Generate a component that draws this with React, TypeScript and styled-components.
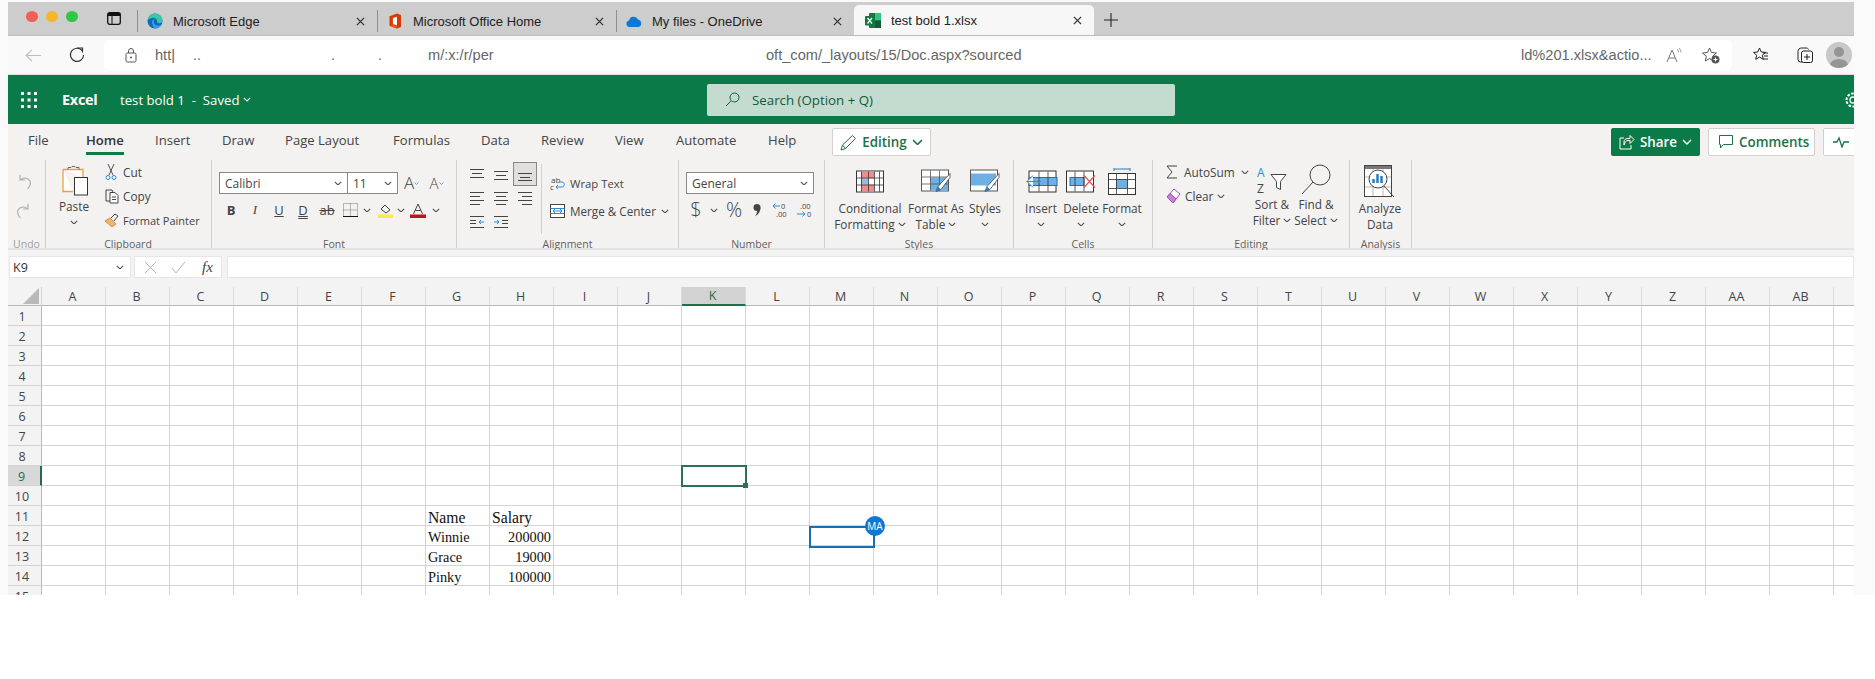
import React from "react";
import styled, { createGlobalStyle } from "styled-components";

const ui = `"Open Sans", "Noto Sans", sans-serif`;
const chrome = `"Liberation Sans", Arial, sans-serif`;

const Global = createGlobalStyle`
  html, body { margin: 0; padding: 0; background: #fff; }
  #root { width: 1875px; height: 679px; overflow: hidden; }
`;

const Page = styled.div`
  width: 1875px; height: 679px; background: #fff; overflow: hidden;
  display: flex;
  background: linear-gradient(#fafafa 0 595px, #fff 595px);
`;
const Win = styled.div`
  margin: 2px 0 0 8px; width: 1846px; height: 593px; overflow: hidden;
  display: flex; flex-direction: column; background: #fff;
`;

/* ---------- browser tab strip ---------- */
const Strip = styled.div`
  height: 34px; flex: none; background: #cdcdcd; border-bottom: 1px solid #bdbdbd; box-sizing: border-box;
  display: flex; align-items: center; padding-left: 18px; font: 13px ${chrome}; color: #222;
`;
const Light = styled.span<{ $c: string }>`
  width: 12px; height: 11px; border-radius: 50%; background: ${(p) => p.$c}; margin: 0 8px 4px 0; flex: none;
`;
const SideIcon = styled.svg`margin: 0 16px 0 21px; flex: none;`;
const Tab = styled.div<{ $w: number; $active?: boolean }>`
  width: ${(p) => p.$w}px; height: ${(p) => (p.$active ? 30 : 22)}px; flex: none; box-sizing: border-box;
  align-self: flex-end; margin-bottom: ${(p) => (p.$active ? 0 : 3)}px;
  display: flex; align-items: center; padding-left: ${(p) => (p.$active ? 11 : 9)}px; gap: 10px; white-space: nowrap;
  border-left: ${(p) => (p.$active ? "none" : "1px solid #8f8f8f")};
  background: ${(p) => (p.$active ? "#f7f7f7" : "transparent")};
  border-radius: ${(p) => (p.$active ? "5px 5px 0 0" : "0")};
`;
const TabIcon = styled.svg`flex: none;`;
const TabTitle = styled.span`flex: 1; min-width: 0;`;
const TabClose = styled.svg`flex: none; margin-right: 12px;`;
const Plus = styled.svg`margin: 3px 0 0 10px; flex: none;`;

/* ---------- address bar ---------- */
const AddrRow = styled.div`
  height: 39px; flex: none; background: #f9f9f9; box-sizing: border-box; border-bottom: 1px solid #dedede;
  display: flex; align-items: center; padding: 0 0 0 17px;
`;
const NavIcon = styled.svg<{ $mr: number }>`flex: none; margin-right: ${(p) => p.$mr}px;`;
const AddrBox = styled.div`
  width: 1628px; height: 30px; flex: none; background: #fff; border-radius: 5px; margin-right: 21px;
  display: flex; align-items: center; padding-left: 21px; box-sizing: border-box;
  font: 14.6px ${chrome}; color: #666; white-space: nowrap;
`;
const Lock = styled.svg`flex: none; margin-right: 18px;`;
const UrlBit = styled.span<{ $w: number }>`width: ${(p) => p.$w}px; flex: none; overflow: hidden;`;
const AddrTail = styled.svg<{ $mr: number }>`flex: none; margin-right: ${(p) => p.$mr}px;`;
const Avatar = styled.span`
  width: 26px; height: 26px; border-radius: 50%; background: #c8c8c8; flex: none; margin-left: 13px; overflow: hidden;
  display: flex; align-items: center; justify-content: center;
`;

/* ---------- excel green header ---------- */
const Green = styled.div`
  height: 49px; flex: none; background: #0a7b48; color: #fff;
  display: flex; align-items: center; padding-left: 13px; position: relative; font-family: ${ui};
`;
const Waffle = styled.svg`flex: none; margin-right: 25px;`;
const AppName = styled.span`font-size: 14.5px; font-weight: 700; letter-spacing: -0.3px; width: 58px; flex: none;`;
const DocName = styled.span`font-size: 13.2px; width: 587px; flex: none; display: flex; align-items: center; gap: 4px;`;
const Search = styled.div`
  width: 468px; height: 32px; flex: none; background: #c3dccf; border-radius: 2px; color: #14583a;
  display: flex; align-items: center; gap: 12px; padding-left: 18px; box-sizing: border-box; font-size: 13.3px;
`;
const Gear = styled.svg`position: absolute; right: -8px; top: 16px;`;

/* ---------- ribbon tabs ---------- */
const TabsRow = styled.div`
  height: 34px; flex: none; background: #f3f2f1; display: flex; align-items: flex-start;
  padding-left: 20px; font: 13.1px ${ui}; color: #444; position: relative;
`;
const RibSlot = styled.div<{ $w: number }>`
  width: ${(p) => p.$w}px; flex: none;
`;
const RibTab = styled.span<{ $on?: boolean }>`
  display: inline-block; height: 31px; line-height: 32px; white-space: nowrap; box-sizing: border-box;
  font-weight: ${(p) => (p.$on ? 600 : 400)}; color: ${(p) => (p.$on ? "#333" : "#444")};
  border-bottom: ${(p) => (p.$on ? "3px solid #107c41" : "3px solid transparent")};
`;
const EditBtn = styled.div`
  margin-top: 4px; width: 99px; height: 28px; box-sizing: border-box; background: #fff; border: 1px solid #d2d0ce; border-radius: 2px;
  flex: none; display: flex; align-items: center; justify-content: center; gap: 5px; color: #1a7346; font-weight: 600; font-size: 13.4px;
`;
const Right = styled.div`
  position: absolute; left: 1603px; top: 4px; display: flex; gap: 8px; white-space: nowrap;
`;
const ShareBtn = styled.div`
  width: 89px; height: 28px; background: #0a7b48; color: #fff; border-radius: 2px; font-weight: 600;
  display: flex; align-items: center; justify-content: center; gap: 5px; font-size: 13.4px;
`;
const GhostBtn = styled.div<{ $w: number }>`
  width: ${(p) => p.$w}px; height: 28px; flex: none; box-sizing: border-box; background: #fff; border: 1px solid #d2d0ce; border-radius: 2px; color: #1a7346; font-weight: 600;
  display: flex; align-items: center; gap: 5px; padding-left: 9px; font-size: 13.4px;
  & > svg { flex: none; }
`;

/* ---------- ribbon ---------- */
const Ribbon = styled.div`
  height: 92px; flex: none; background: #f3f2f1; display: flex; padding-top: 2px; box-sizing: border-box;
  font: 11.8px ${ui}; color: #444; border-bottom: 2px solid #e4e4e4;
`;
const Group = styled.div<{ $w: number }>`
  width: ${(p) => p.$w}px; height: 88px; flex: none; box-sizing: border-box; border-right: 1px solid #d2d0ce;
  display: flex; flex-direction: column;
`;
const Body = styled.div<{ $pl?: number; $pt?: number }>`
  height: 78px; flex: none; display: flex; box-sizing: border-box;
  padding-left: ${(p) => p.$pl ?? 0}px; padding-top: ${(p) => p.$pt ?? 0}px;
`;
const Label = styled.div<{ $dim?: boolean; $shift?: number }>`
  height: 10px; line-height: 12px; font-size: 10.5px; text-align: center; white-space: nowrap;
  color: ${(p) => (p.$dim ? "#a19f9d" : "#605e5c")}; margin-left: ${(p) => p.$shift ?? 0}px;
`;
const UndoStack = styled.div`display: flex; flex-direction: column; gap: 13px; padding: 14px 0 0 8px;`;
const BigBtn = styled.div<{ $w: number; $ih?: number }>`
  width: ${(p) => p.$w}px; flex: none; display: flex; flex-direction: column; align-items: center; line-height: 16px; white-space: nowrap;
  & > svg:first-child { height: ${(p) => p.$ih ?? 37}px; margin-top: 3px; flex: none; }
`;
const TextLine = styled.div`display: flex; align-items: center; gap: 3px; height: 16px;`;
const SmallList = styled.div<{ $ml?: number; $w?: number; $pt?: number }>`
  display: flex; flex-direction: column; margin-left: ${(p) => p.$ml ?? 0}px; padding-top: ${(p) => p.$pt ?? 0}px;
  ${(p) => (p.$w ? `width:${p.$w}px;flex:none;` : "")}
`;
const SmallRow = styled.div<{ $h?: number; $gap?: number; $fs?: number }>`
  height: ${(p) => p.$h ?? 24}px; display: flex; align-items: center; gap: ${(p) => p.$gap ?? 6}px; white-space: nowrap;
  font-size: ${(p) => p.$fs ?? 11.3}px;
  & > svg:first-child { flex: none; }
`;
const FontCol = styled.div`display: flex; flex-direction: column; gap: 5px;`;
const RowLine = styled.div`display: flex; align-items: center; height: 22px;`;
const SelectBox = styled.div<{ $w: number }>`
  width: ${(p) => p.$w}px; height: 22px; flex: none; box-sizing: border-box; border: 1px solid #8a8886; background: #fff; font-size: 12px;
  display: flex; align-items: center;
`;
const SelectPart = styled.div<{ $w: number; $div?: boolean }>`
  width: ${(p) => p.$w}px; flex: none; height: 100%; display: flex; align-items: center; justify-content: space-between; box-sizing: border-box;
  padding: 0 5px; border-right: ${(p) => (p.$div ? "1px solid #8a8886" : "none")};
`;
const Slot = styled.div<{ $w: number; $h?: number }>`
  width: ${(p) => p.$w}px; height: ${(p) => p.$h ?? 22}px; flex: none; display: flex; align-items: center; justify-content: center;
`;
const FmtLetter = styled.span<{ $b?: boolean; $i?: boolean; $u?: boolean; $d?: boolean; $s?: boolean }>`
  font-size: 13px; color: #444; font-family: ${(p) => (p.$i ? `"Liberation Serif", serif` : ui)};
  font-weight: ${(p) => (p.$b ? 700 : 400)}; font-style: ${(p) => (p.$i ? "italic" : "normal")};
  text-decoration: ${(p) => (p.$u ? "underline" : p.$d ? "underline double" : p.$s ? "line-through" : "none")};
`;
const BigGlyph = styled.span<{ $s: number }>`font-size: ${(p) => p.$s}px; line-height: 22px; color: #444; font-weight: 300;`;
const AlignGrid = styled.div`
  display: grid; grid-template-columns: repeat(3, 24px); grid-auto-rows: 24px; padding-top: 2px; flex: none;
`;
const AlignCell = styled.div<{ $on?: boolean }>`
  display: flex; align-items: center; justify-content: center; box-sizing: border-box;
  ${(p) => (p.$on ? "background:#e1dfdd;border:1px solid #8a8886;" : "")}
`;
const VRule = styled.div`width: 1px; height: 70px; margin: 4px 0 0 4px; background: #d2d0ce; flex: none;`;

/* ---------- formula bar ---------- */
const FormulaBar = styled.div`
  height: 37px; flex: none; background: #f3f3f3; display: flex; align-items: flex-start; padding: 6px 0 0 1px; box-sizing: border-box;
  font: 12.5px ${ui}; color: #333; gap: 3px;
`;
const NameBox = styled.div`
  width: 122px; height: 22px; box-sizing: border-box; background: #fff; border: 1px solid #e6e6e6; flex: none;
  display: flex; align-items: center; justify-content: space-between; padding: 0 6px 0 3px;
`;
const FxBox = styled.div`
  width: 88px; height: 22px; box-sizing: border-box; background: #fff; border: 1px solid #e6e6e6; flex: none;
  display: flex; align-items: center; gap: 14px; padding-left: 9px;
`;
const FxText = styled.span`font: italic 15px "Liberation Serif", serif; margin-left: 2px; color: #444;`;
const FormulaInput = styled.div`
  flex: 1; height: 22px; box-sizing: border-box; background: #fff; border: 1px solid #e6e6e6; margin-left: 2px;
`;

/* ---------- sheet ---------- */
const Sheet = styled.div`
  position: relative; flex: 1; min-height: 0; overflow: hidden; background: #fff;
  display: grid; grid-template-columns: 34px repeat(29, 64px); grid-template-rows: 19px; grid-auto-rows: 20px;
  font: 12.5px ${ui}; color: #444;
`;
const Corner = styled.div`
  background: #f3f3f3; border-right: 1px solid #d4d4d4; border-bottom: 1px solid #b8b8b8; box-sizing: border-box;
  display: flex; align-items: center; justify-content: flex-end; padding-right: 2px;
`;
const ColHead = styled.div<{ $on?: boolean }>`
  box-sizing: border-box; display: flex; align-items: center; justify-content: center; white-space: nowrap; padding-right: 2px;
  background: ${(p) => (p.$on ? "#d2d2d2" : "#f3f3f3")}; color: ${(p) => (p.$on ? "#1f6e4a" : "#444")};
  border-right: 1px solid #dcdcdc; border-bottom: ${(p) => (p.$on ? "2px solid #1f6e4a" : "1px solid #b8b8b8")};
`;
const RowHead = styled.div<{ $on?: boolean }>`
  box-sizing: border-box; display: flex; align-items: center; justify-content: center; padding: 2px 5px 0 0;
  background: ${(p) => (p.$on ? "#d8d8d8" : "#f3f3f3")}; color: ${(p) => (p.$on ? "#1f6e4a" : "#444")};
  border-right: ${(p) => (p.$on ? "2px solid #1f6e4a" : "1px solid #b8b8b8")}; border-bottom: 1px solid #d4d4d4;
`;
const Cell = styled.div<{ $big?: boolean; $num?: boolean }>`
  box-sizing: border-box; border-right: 1px solid #d4d4d4; border-bottom: 1px solid #d4d4d4;
  font-family: "Liberation Serif", "Times New Roman", serif; color: #111; white-space: nowrap;
  font-size: ${(p) => (p.$big ? 15.7 : 14.3)}px; line-height: 19px; padding: ${(p) => (p.$big ? 2 : 2)}px 2px 0;
  text-align: ${(p) => (p.$num ? "right" : "left")};
`;
const Selection = styled.div<{ $x: number; $y: number; $c: string }>`
  position: absolute; left: ${(p) => p.$x}px; top: ${(p) => p.$y}px; width: 66px; height: 22px; box-sizing: border-box;
  border: 2px solid ${(p) => p.$c};
`;
const Handle = styled.div`
  position: absolute; right: -3px; bottom: -3px; width: 5px; height: 5px; background: #2f6f55;
`;
const Badge = styled.div`
  position: absolute; left: 857px; top: 229px; width: 20px; height: 20px; border-radius: 50%; background: #0f78d4; color: #fff;
  font: 10px ${ui}; display: flex; align-items: center; justify-content: center;
`;

/* ---------- icons ---------- */
const Chev = ({ s = 8, c = "#555" }: { s?: number; c?: string }) => (
  <svg width={s} height={s * 0.6} viewBox="0 0 10 6"><path d="M1 1l4 4 4-4" fill="none" stroke={c} strokeWidth="1.4" /></svg>
);
const X = ({ c = "#333", s = 9 }: { c?: string; s?: number }) => (
  <TabClose width={s} height={s} viewBox="0 0 10 10"><path d="M1 1l8 8M9 1l-8 8" stroke={c} strokeWidth="1.4" /></TabClose>
);
const Lines = ({ rows }: { rows: [number, number, number][] }) => (
  <svg width="15" height="14" viewBox="0 0 15 14">
    {rows.map(([x, w, y], i) => <path key={i} d={`M${x} ${y + 0.5}h${w}`} stroke="#444" strokeWidth="1" />)}
  </svg>
);
const Cal = ({ w, h }: { w: number; h: number }) => (
  <rect x="0.5" y="0.5" width={w - 1} height={h - 1} fill="#fff" stroke="#333" />
);

const ribbonTabs: [string, number][] = [["File", 58], ["Home", 69], ["Insert", 67], ["Draw", 63], ["Page Layout", 108], ["Formulas", 88], ["Data", 60], ["Review", 74], ["View", 61], ["Automate", 92], ["Help", 64]];
const cols = "A B C D E F G H I J K L M N O P Q R S T U V W X Y Z AA AB AC".split(" ");
const data: Record<string, [string, boolean?, boolean?]> = {
  "11-6": ["Name", true], "11-7": ["Salary", true],
  "12-6": ["Winnie"], "12-7": ["200000", false, true],
  "13-6": ["Grace"], "13-7": ["19000", false, true],
  "14-6": ["Pinky"], "14-7": ["100000", false, true],
};

export default function App() {
  return (
    <Page>
      <Global />
      <Win>
        <Strip>
          <Light $c="#f25f57" /><Light $c="#f5b62d" /><Light $c="#2fc840" />
          <SideIcon width="14" height="13" viewBox="0 0 14 13"><rect x="0.7" y="0.7" width="12.6" height="11.6" rx="2" fill="none" stroke="#111" strokeWidth="1.3" /><path d="M1 1h12v3H1z" fill="#111" /><path d="M5 4v8" stroke="#111" /></SideIcon>
          <Tab $w={240}>
            <TabIcon width="16" height="16" viewBox="0 0 16 16">
              <circle cx="8" cy="8" r="7.5" fill="#1466b8" />
              <path d="M0.6 7C1.5 3 4.5.5 8 .5c4 0 7.5 3 7.5 6.7 0 2.6-2.5 3.5-4.4 2.8-1-.4-1.3-1-.9-1.8C9.8 6 7.5 4.3 5 5 3 5.6 1.5 6.5.6 7z" fill="#39c8a6" />
              <path d="M5 8.5c0-1.8 1.6-2.7 3-2.6-2 1-1.7 5 1.5 6.3 1.7.7 3.6.3 5.3-.8C13.5 14 11 15.5 8 15.5 6 14 5 11 5 8.5z" fill="#2ea3e6" />
            </TabIcon>
            <TabTitle>Microsoft Edge</TabTitle><X />
          </Tab>
          <Tab $w={239}>
            <TabIcon width="16" height="16" viewBox="0 0 16 16">
              <path d="M2.500 3.200L10 .5 14 2v12l-4 1.500-7.500-2.700z" fill="#d83b01" />
              <path d="M2.500 12.800l7.500 2.700V3.500L5.500 4.800v6.600z" fill="#ea4e1b" /><path d="M6 5L10 3.800v8.400L6 11z" fill="#fff" />
            </TabIcon>
            <TabTitle>Microsoft Office Home</TabTitle><X />
          </Tab>
          <Tab $w={238}>
            <TabIcon width="16" height="11" viewBox="0 0 16 11">
              <path d="M3.5 11A3.3 3.3 0 0 1 3 4.5 4.8 4.8 0 0 1 12 3.6 3.8 3.8 0 0 1 12.4 11z" fill="#0f78d4" />
            </TabIcon>
            <TabTitle>My files - OneDrive</TabTitle><X />
          </Tab>
          <Tab $w={240} $active>
            <TabIcon width="16" height="15" viewBox="0 0 16 15">
              <rect x="4" y="0" width="12" height="15" rx="1" fill="#107c41" /><rect x="10" y="0" width="6" height="7.5" fill="#33c481" /><rect x="10" y="7.5" width="6" height="7.5" fill="#185c37" />
              <rect x="0" y="3" width="9.5" height="9.5" rx="1" fill="#0f7a3f" />
              <path d="M2.5 5l4.5 5.5M7 5l-4.5 5.5" stroke="#fff" strokeWidth="1.3" />
            </TabIcon>
            <TabTitle>test bold 1.xlsx</TabTitle><X />
          </Tab>
          <Plus width="14" height="14" viewBox="0 0 14 14"><path d="M7 0v14M0 7h14" stroke="#222" strokeWidth="1.1" /></Plus>
        </Strip>

        <AddrRow>
          <NavIcon $mr={28} width="16" height="13" viewBox="0 0 16 13"><path d="M16 6.5H1M7 .8L1 6.5l6 5.700" fill="none" stroke="#bdbdbd" strokeWidth="1.1" /></NavIcon>
          <NavIcon $mr={19} width="16" height="16" viewBox="0 0 16 16"><path d="M13 3.5A6.6 6.6 0 1 0 14.6 8" fill="none" stroke="#333" strokeWidth="1.2" /><path d="M8.5 1h5v4.5" fill="none" stroke="#333" strokeWidth="1.2" /></NavIcon>
          <AddrBox>
            <Lock width="12" height="15" viewBox="0 0 12 15"><rect x="1" y="5" width="10" height="9" rx="1.5" fill="none" stroke="#555" /><path d="M3.5 5V3a2.5 2.5 0 0 1 5 0v2" fill="none" stroke="#555" /><circle cx="6" cy="9.5" r="1" fill="#555" /></Lock>
            <UrlBit $w={38}>htt|</UrlBit>
            <UrlBit $w={138}>..</UrlBit>
            <UrlBit $w={47}>.</UrlBit>
            <UrlBit $w={50}>.</UrlBit>
            <UrlBit $w={338}>m/:x:/r/per</UrlBit>
            <UrlBit $w={755}>oft_com/_layouts/15/Doc.aspx?sourced</UrlBit>
            <UrlBit $w={145}>ld%201.xlsx&amp;actio...</UrlBit>
            <AddrTail $mr={20} width="16" height="15" viewBox="0 0 16 15"><path d="M1 14L6 2l5 12M3 10h6" fill="none" stroke="#777" /><path d="M11 1c1 1 1.5 2 1.5 3.5M13 0c1.5 1.500 2 3 2 4.500" fill="none" stroke="#777" strokeWidth=".8" /></AddrTail>
            <AddrTail $mr={0} width="18" height="17" viewBox="0 0 18 17"><path d="M7.500 1l2 4.500 5 .5-3.800 3.200 1 4.800L7.500 11.500 3.300 14l1-4.800L.5 6l5-.5z" fill="none" stroke="#555" /><circle cx="13.500" cy="12.500" r="4" fill="#555" /><path d="M13.500 10.500v4M11.500 12.500h4" stroke="#fff" /></AddrTail>
          </AddrBox>
          <NavIcon $mr={28} width="16" height="16" viewBox="0 0 16 16"><path d="M6.500 1l1.800 4 4.200.4-3.200 2.800 1 4.100-3.800-2.200L2.700 12.300l1-4.100L.5 5.400l4.200-.4z" fill="none" stroke="#222" /><path d="M10 6h5M11 9h4M10 12h5" stroke="#222" /></NavIcon>
          <NavIcon $mr={0} width="16" height="16" viewBox="0 0 16 16"><path d="M5 15H3.500A2.500 2.500 0 0 1 1 12.500V4.500C1 2.500 2.500 1 4.500 1H9.500c1 0 1.700.6 2 1.500" fill="none" stroke="#222" /><rect x="4.500" y="4" width="11" height="11.500" rx="2" fill="none" stroke="#222" /><path d="M10 7v6M7 10h6" stroke="#222" /></NavIcon>
          <Avatar>
            <svg width="26" height="26" viewBox="0 0 26 26"><circle cx="13" cy="10" r="5" fill="#959595" /><ellipse cx="13" cy="23" rx="9" ry="6" fill="#959595" /></svg>
          </Avatar>
        </AddrRow>

        <Green>
          <Waffle width="16" height="16" viewBox="0 0 16 16" fill="#fff">
            {[0, 6.5, 13].map((y) => [0, 6.5, 13].map((x) => <rect key={`${x}-${y}`} x={x} y={y} width="3" height="3" />))}
          </Waffle>
          <AppName>Excel</AppName>
          <DocName>test bold 1&nbsp; -&nbsp; Saved <Chev s={8} c="#fff" /></DocName>
          <Search>
            <svg width="15" height="15" viewBox="0 0 15 15"><circle cx="9.500" cy="5.500" r="4.500" fill="none" stroke="#14583a" /><path d="M6 9l-5 5" stroke="#14583a" /></svg>
            Search (Option + Q)
          </Search>
          <Gear width="18" height="18" viewBox="0 0 18 18"><circle cx="9" cy="9" r="3" fill="none" stroke="#fff" strokeWidth="1.300" /><circle cx="9" cy="9" r="6.500" fill="none" stroke="#fff" strokeWidth="2" strokeDasharray="2.500 1.500" /></Gear>
        </Green>

        <TabsRow>
          {ribbonTabs.map(([t, w]) => (
            <RibSlot key={t} $w={w}><RibTab $on={t === "Home"}>{t}</RibTab></RibSlot>
          ))}
          <EditBtn>
            <svg width="17" height="17" viewBox="0 0 17 17"><path d="M1 16l1.500-5L12.500 1.500l3 3-10 10zM2.500 11l3 3.500" fill="none" stroke="#1a7346" /></svg>
            Editing <Chev s={11} c="#1a7346" />
          </EditBtn>
          <Right>
            <ShareBtn>
              <svg width="16" height="16" viewBox="0 0 16 16"><path d="M5 4H1v11h11v-4" fill="none" stroke="#fff" /><path d="M5 11V8c0-2 1.500-3.500 4-3.500h2V1.500l4 4-4 4V6.500H9C7 6.500 6 8 5 11z" fill="none" stroke="#fff" /></svg>
              Share <Chev s={10} c="#fff" />
            </ShareBtn>
            <GhostBtn $w={107}>
              <svg width="16" height="16" viewBox="0 0 16 16"><path d="M1.500 1.500h13v9H5.500l-3 3.500v-3.500h-1z" fill="none" stroke="#1a7346" /></svg>
              Comments
            </GhostBtn>
            <GhostBtn $w={100}>
              <svg width="17" height="12" viewBox="0 0 17 12"><path d="M0 6h4l2-4 3 9 2-5h5" fill="none" stroke="#1a7346" strokeWidth="1.300" /></svg>
              Catch up
            </GhostBtn>
          </Right>
        </TabsRow>

        <Ribbon>
          <Group $w={38}>
            <Body>
              <UndoStack>
                <svg width="16" height="16" viewBox="0 0 16 16"><path d="M4 1v5h5M4.500 6C7 3 12 3.500 14 7c1 2.500 0 5.500-2.500 8" fill="none" stroke="#b0b0b0" strokeWidth="1.200" /></svg>
                <svg width="16" height="16" viewBox="0 0 16 16"><path d="M12 1v5H7M11.500 6C9 3 4 3.500 2 7c-1 2.500 0 5.500 2.500 8" fill="none" stroke="#b0b0b0" strokeWidth="1.200" /></svg>
              </UndoStack>
            </Body>
            <Label $dim>Undo</Label>
          </Group>

          <Group $w={166}>
            <Body $pl={8}>
              <BigBtn $w={40} $ih={35}>
                <svg width="28" height="30" viewBox="0 0 28 30"><path d="M3 4h20v8M3 4v22h10" fill="#fff" stroke="#e8a33d" strokeWidth="1.300" /><path d="M8 4V2h3l1-1h3l1 1h3v2" fill="none" stroke="#666" /><rect x="14.500" y="12" width="13" height="17.500" fill="#fff" stroke="#333" /></svg>
                <TextLine>Paste</TextLine>
                <TextLine><Chev /></TextLine>
              </BigBtn>
              <SmallList $ml={11}>
                <SmallRow $fs={11.8}>
                  <svg width="12" height="16" viewBox="0 0 12 16"><path d="M3 0l5 11M9 0L4 11" fill="none" stroke="#555" /><circle cx="3" cy="13.500" r="2" fill="none" stroke="#2a8dd4" /><circle cx="9" cy="13.500" r="2" fill="none" stroke="#2a8dd4" /></svg>
                  Cut
                </SmallRow>
                <SmallRow $gap={4} $fs={11.8}>
                  <svg width="14" height="15" viewBox="0 0 14 15"><path d="M5 12H1V1h6l1 2" fill="none" stroke="#444" /><path d="M5 3.500h5l3 3V14H5z" fill="#fff" stroke="#444" /><path d="M7 8h4M7 10.500h4" stroke="#444" /></svg>
                  Copy
                </SmallRow>
                <SmallRow $gap={4} $fs={11}>
                  <svg width="14" height="14" viewBox="0 0 14 14"><path d="M0 8l5-3 6 6-4 3z" fill="#f2b36b" stroke="#c8762a" strokeWidth=".7" /><path d="M6 5l4-4 3 2-4 5" fill="none" stroke="#444" /></svg>
                  Format Painter
                </SmallRow>
              </SmallList>
            </Body>
            <Label $shift={-1}>Clipboard</Label>
          </Group>

          <Group $w={245}>
            <Body $pl={7} $pt={12}>
              <FontCol>
                <RowLine>
                  <SelectBox $w={179}>
                    <SelectPart $w={128} $div>Calibri <Chev /></SelectPart>
                    <SelectPart $w={49}>11 <Chev /></SelectPart>
                  </SelectBox>
                  <Slot $w={27}><BigGlyph $s={17}>A</BigGlyph><Chev s={5} c="#2a8dd4" /></Slot>
                  <Slot $w={23}><BigGlyph $s={15}>A</BigGlyph><Chev s={5} c="#2a8dd4" /></Slot>
                </RowLine>
                <RowLine>
                  <Slot $w={24}><FmtLetter $b>B</FmtLetter></Slot>
                  <Slot $w={24}><FmtLetter $i>I</FmtLetter></Slot>
                  <Slot $w={24}><FmtLetter $u>U</FmtLetter></Slot>
                  <Slot $w={24}><FmtLetter $d>D</FmtLetter></Slot>
                  <Slot $w={24}><FmtLetter $s>ab</FmtLetter></Slot>
                  <Slot $w={22}><svg width="15" height="14" viewBox="0 0 15 14"><path d="M.5.500h14v13H.500zM7.500.500v13M.5 7h14" fill="none" stroke="#777" strokeDasharray="1 1" /><path d="M0 13.500h15" stroke="#111" /></svg></Slot>
                  <Slot $w={12}><Chev /></Slot>
                  <Slot $w={24}><svg width="15" height="15" viewBox="0 0 15 15"><path d="M3 6l4-4 5 5-4 3z" fill="none" stroke="#444" /><rect x="0" y="11.500" width="15" height="3.500" fill="#f5ee3b" /></svg></Slot>
                  <Slot $w={8}><Chev /></Slot>
                  <Slot $w={26}><svg width="16" height="15" viewBox="0 0 16 15"><path d="M3.500 11L8 1l4.500 10M5.500 7.500h5" fill="none" stroke="#444" /><rect x="0" y="11.500" width="16" height="3.500" fill="#c50f1f" /></svg></Slot>
                  <Slot $w={10}><Chev /></Slot>
                </RowLine>
              </FontCol>
            </Body>
            <Label>Font</Label>
          </Group>

          <Group $w={222}>
            <Body $pl={8}>
              <AlignGrid>
                <AlignCell><Lines rows={[[0, 14, 2], [2, 10, 6], [0, 14, 10]]} /></AlignCell>
                <AlignCell><Lines rows={[[0, 14, 4], [2, 10, 8], [0, 14, 12]]} /></AlignCell>
                <AlignCell $on><Lines rows={[[0, 14, 6], [2, 10, 10], [0, 14, 13]]} /></AlignCell>
                <AlignCell><Lines rows={[[0, 14, 1], [0, 10, 5], [0, 14, 9], [0, 10, 13]]} /></AlignCell>
                <AlignCell><Lines rows={[[0, 14, 1], [2, 10, 5], [0, 14, 9], [2, 10, 13]]} /></AlignCell>
                <AlignCell><Lines rows={[[0, 14, 1], [4, 10, 5], [0, 14, 9], [4, 10, 13]]} /></AlignCell>
                <AlignCell>
                  <svg width="15" height="14" viewBox="0 0 15 14"><path d="M0 1.500h14M0 12.500h14M0 5.500h6M0 8.500h6" stroke="#444" /><path d="M14 7H9M11 5L9 7l2 2" fill="none" stroke="#2a8dd4" /></svg>
                </AlignCell>
                <AlignCell>
                  <svg width="15" height="14" viewBox="0 0 15 14"><path d="M0 1.500h14M0 12.500h14M8 5.500h6M8 8.500h6" stroke="#444" /><path d="M0 7h5M3 5l2 2-2 2" fill="none" stroke="#2a8dd4" /></svg>
                </AlignCell>
              </AlignGrid>
              <VRule />
              <SmallList $ml={8} $pt={9}>
                <SmallRow $h={28} $gap={5}>
                  <svg width="15" height="15" viewBox="0 0 15 15"><text x="1" y="6.500" fontSize="8" fill="#444" fontFamily="Open Sans">ab</text><text x="0" y="14" fontSize="8" fill="#444" fontFamily="Open Sans">c</text><path d="M6 11h6c3 0 3-5 0-5h-2M8 9l-2 2 2 2" fill="none" stroke="#2a8dd4" /></svg>
                  Wrap Text
                </SmallRow>
                <SmallRow $h={28} $gap={5} $fs={11.7}>
                  <svg width="15" height="14" viewBox="0 0 15 14"><rect x=".5" y=".5" width="14" height="13" fill="#fff" stroke="#444" /><path d="M.5 4.500h14M.5 9.500h14" stroke="#2a8dd4" /><path d="M3 7h9M5 5L3 7l2 2M10 5l2 2-2 2" fill="none" stroke="#2a8dd4" /></svg>
                  Merge &amp; Center <Chev />
                </SmallRow>
              </SmallList>
            </Body>
            <Label>Alignment</Label>
          </Group>

          <Group $w={146}>
            <Body $pl={7} $pt={12}>
              <FontCol>
                <RowLine><SelectBox $w={128}><SelectPart $w={126}>General <Chev /></SelectPart></SelectBox></RowLine>
                <RowLine>
                  <Slot $w={20}><BigGlyph $s={20}>$</BigGlyph></Slot>
                  <Slot $w={16}><Chev /></Slot>
                  <Slot $w={24}><BigGlyph $s={20}>%</BigGlyph></Slot>
                  <Slot $w={22}><svg width="8" height="15" viewBox="0 0 8 15"><circle cx="4" cy="4.500" r="3.500" fill="#444" /><path d="M7.500 4.500c0 4-2 7-5.500 9 1.500-2 2.200-4 2-6z" fill="#444" /></svg></Slot>
                  <Slot $w={24}><svg width="17" height="16" viewBox="0 0 17 16"><text x="9" y="7" fontSize="7.500" fill="#444" fontFamily="Open Sans">0</text><text x="4" y="15" fontSize="7.500" fill="#444" fontFamily="Open Sans">.00</text><path d="M8 4H1M3.500 1.500L1 4l2.500 2.500" fill="none" stroke="#2a8dd4" /></svg></Slot>
                  <Slot $w={24}><svg width="17" height="16" viewBox="0 0 17 16"><text x="4" y="7" fontSize="7.500" fill="#444" fontFamily="Open Sans">.00</text><text x="11" y="15" fontSize="7.500" fill="#444" fontFamily="Open Sans">0</text><path d="M1 12h8M6.500 9.500L9 12l-2.500 2.500" fill="none" stroke="#2a8dd4" /></svg></Slot>
                </RowLine>
              </FontCol>
            </Body>
            <Label>Number</Label>
          </Group>

          <Group $w={189}>
            <Body $pl={10}>
              <BigBtn $w={70}>
                <svg width="28" height="22" viewBox="0 0 28 22"><Cal w={28} h={22} /><rect x="5" y="1" width="13" height="7" fill="#f28b8b" /><rect x="5" y="8" width="7" height="6" fill="#8cc0ea" /><rect x="5" y="14" width="13" height="7" fill="#f28b8b" /><path d="M1 7.500h26M1 14.500h26M5.500 1v20M12.500 1v20M18.500 1v20M23.500 1v20" stroke="#333" strokeWidth=".8" /></svg>
                <TextLine>Conditional</TextLine>
                <TextLine>Formatting <Chev /></TextLine>
              </BigBtn>
              <BigBtn $w={62}>
                <svg width="30" height="24" viewBox="0 0 30 24"><rect x=".5" y=".5" width="27" height="21" fill="#fff" stroke="#555" /><rect x="9" y="8" width="18" height="13" fill="#6db0e4" /><path d="M1 7.500h26M1 14.500h26M9.500 1v20M18.500 1v20" stroke="#555" strokeWidth=".8" /><path d="M29 4L17 17l-2 5 5-2L29 8z" fill="#fff" stroke="#444" strokeWidth=".8" /><path d="M15 22l2-5 3 3z" fill="#2a7cc0" /></svg>
                <TextLine>Format As</TextLine>
                <TextLine>Table <Chev /></TextLine>
              </BigBtn>
              <BigBtn $w={36}>
                <svg width="30" height="24" viewBox="0 0 30 24"><rect x=".5" y=".5" width="27" height="21" fill="#fff" stroke="#555" /><rect x="1" y="4" width="25" height="12" fill="#6db0e4" /><path d="M29 4L17 17l-2 5 5-2L29 8z" fill="#fff" stroke="#444" strokeWidth=".8" /><path d="M15 22l2-5 3 3z" fill="#2a7cc0" /></svg>
                <TextLine>Styles</TextLine>
                <TextLine><Chev /></TextLine>
              </BigBtn>
            </Body>
            <Label>Styles</Label>
          </Group>

          <Group $w={139}>
            <Body $pl={7}>
              <BigBtn $w={40}>
                <svg width="33" height="22" viewBox="0 0 33 22"><rect x="4" y=".5" width="27" height="21" fill="#fff" stroke="#333" /><rect x="4" y="7" width="28" height="8" fill="#6db0e4" stroke="#2a6fa8" /><path d="M14 1v20M23 1v20" stroke="#333" strokeWidth=".8" /><path d="M16 11H2M8 5l-6 6 6 6" fill="#fff" stroke="#2a8dd4" /></svg>
                <TextLine>Insert</TextLine>
                <TextLine><Chev /></TextLine>
              </BigBtn>
              <BigBtn $w={40}>
                <svg width="30" height="22" viewBox="0 0 30 22"><rect x=".5" y=".5" width="27" height="21" fill="#fff" stroke="#333" /><rect x="4" y="7" width="14" height="8" fill="#6db0e4" stroke="#2a6fa8" /><path d="M9 1v20M18 1v20" stroke="#333" strokeWidth=".8" /><path d="M18 5l11 12M29 5L18 17" stroke="#e0565b" strokeWidth="1.200" /></svg>
                <TextLine>Delete</TextLine>
                <TextLine><Chev /></TextLine>
              </BigBtn>
              <BigBtn $w={42}>
                <svg width="28" height="27" viewBox="0 0 28 27"><path d="M6 1h16M6 0v3M22 0v3" stroke="#2a7cc0" /><rect x=".5" y="5.500" width="27" height="21" fill="#fff" stroke="#333" /><rect x="8" y="11" width="12" height="9" fill="#6db0e4" /><path d="M1 11.500h26M1 20.500h26M8.500 6v20M19.500 6v20" stroke="#333" strokeWidth=".8" /></svg>
                <TextLine>Format</TextLine>
                <TextLine><Chev /></TextLine>
              </BigBtn>
            </Body>
            <Label>Cells</Label>
          </Group>

          <Group $w={197}>
            <Body $pl={13}>
              <SmallList $w={84}>
                <SmallRow $gap={6} $fs={11.8}>
                  <svg width="12" height="14" viewBox="0 0 12 14"><path d="M11 1H1l5 6-5 6h10" fill="none" stroke="#444" /></svg>
                  AutoSum <Chev />
                </SmallRow>
                <SmallRow $gap={4} $fs={11.8}>
                  <svg width="15" height="16" viewBox="0 0 15 16"><path d="M1 9l7-8 6 5-7 9z" fill="#fff" stroke="#a452b8" /><path d="M1 9l3-3.400 6 5L7 15z" fill="#c77fd8" stroke="#a452b8" /></svg>
                  Clear <Chev />
                </SmallRow>
              </SmallList>
              <BigBtn $w={44} $ih={33}>
                <svg width="30" height="28" viewBox="0 0 30 28"><text x="0" y="11" fontSize="12" fill="#2a8dd4" fontFamily="Open Sans">A</text><text x="0" y="27.500" fontSize="12" fill="#444" fontFamily="Open Sans">Z</text><path d="M14 9h15l-5.500 7v8l-4-2v-6z" fill="#fff" stroke="#444" /></svg>
                <TextLine>Sort &amp;</TextLine>
                <TextLine>Filter <Chev /></TextLine>
              </BigBtn>
              <BigBtn $w={44} $ih={33}>
                <svg width="30" height="31" viewBox="0 0 30 31"><circle cx="19" cy="11" r="10" fill="none" stroke="#444" /><path d="M12 18L1 30" stroke="#444" /></svg>
                <TextLine>Find &amp;</TextLine>
                <TextLine>Select <Chev /></TextLine>
              </BigBtn>
            </Body>
            <Label>Editing</Label>
          </Group>

          <Group $w={62}>
            <Body>
              <BigBtn $w={60}>
                <svg width="32" height="33" viewBox="0 0 32 33"><rect x=".5" y=".5" width="27" height="31" fill="#fff" stroke="#444" /><rect x="1" y="1" width="26" height="3" fill="#777" /><path d="M1 12h26M1 22h26M9 4v27M19 4v27" stroke="#bbb" /><circle cx="14" cy="14" r="9" fill="#fff" stroke="#444" /><path d="M9.500 18v-4M13.500 18V9M17.500 18v-7" stroke="#2a7cc0" strokeWidth="2.500" /><path d="M20 21l10 11" stroke="#444" /></svg>
                <TextLine>Analyze</TextLine>
                <TextLine>Data</TextLine>
              </BigBtn>
            </Body>
            <Label>Analysis</Label>
          </Group>
        </Ribbon>

        <FormulaBar>
          <NameBox>K9 <Chev /></NameBox>
          <FxBox>
            <svg width="13" height="13" viewBox="0 0 13 13"><path d="M1 1l11 11M12 1L1 12" stroke="#b5b5b5" /></svg>
            <svg width="15" height="13" viewBox="0 0 15 13"><path d="M1 7l4 5 9-11" fill="none" stroke="#b5b5b5" /></svg>
            <FxText>fx</FxText>
          </FxBox>
          <FormulaInput />
        </FormulaBar>

        <Sheet>
          <Corner><svg width="16" height="16" viewBox="0 0 16 16"><path d="M16 0v16H0z" fill="#b9b9b9" /></svg></Corner>
          {cols.map((c, i) => <ColHead key={c} $on={i === 10}>{i < 28 ? c : ""}</ColHead>)}
          {Array.from({ length: 15 }, (_, r) => r + 1).map((r) => (
            <React.Fragment key={r}>
              <RowHead $on={r === 9}>{r}</RowHead>
              {cols.map((_, i) => {
                const d = data[`${r}-${i}`];
                return <Cell key={i} $big={d?.[1]} $num={d?.[2]}>{d?.[0]}</Cell>;
              })}
            </React.Fragment>
          ))}
          <Selection $x={673} $y={178} $c="#2f6f55"><Handle /></Selection>
          <Selection $x={801} $y={239} $c="#1b6fb0" />
          <Badge>MA</Badge>
        </Sheet>
      </Win>
    </Page>
  );
}
